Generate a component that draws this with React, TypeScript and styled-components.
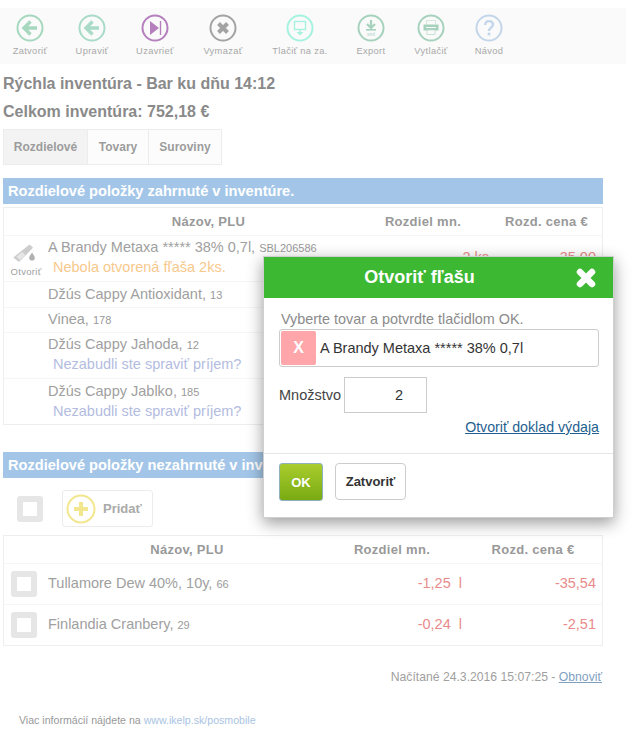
import React from 'react'
import styled, { createGlobalStyle } from 'styled-components'

const GlobalStyle = createGlobalStyle`
  html, body { margin: 0; padding: 0; background: #fff; }
  body { font-family: "Liberation Sans", Arial, sans-serif; color: #888; }
`

const Page = styled.div`
  position: relative;
  width: 637px;
  height: 739px;
  overflow: hidden;
  padding-top: 8px;
  box-sizing: border-box;
`
const Toolbar = styled.div`
  display: flex;
  width: 626px;
  height: 56px;
  background: #fafafa;
`
const ToolItem = styled.div<{ $w: number }>`
  width: ${p => p.$w}px;
  display: flex;
  flex-direction: column;
  align-items: center;
  padding-top: 6px;
  box-sizing: border-box;
  svg { display: block; }
`
const ToolLabel = styled.div`
  margin-top: 3px;
  font-size: 9.3px;
  font-weight: 400;
  line-height: 12px;
  letter-spacing: 0.35px;
  color: #a8a8a8;
  white-space: nowrap;
`
const Content = styled.div`
  width: 600px;
  margin-left: 3px;
  padding-top: 6px;
`
const Heading = styled.div`
  font-size: 16px;
  font-weight: 700;
  line-height: 28px;
  color: #8a8a8a;
`
const Tabs = styled.div`
  display: flex;
  margin-top: 3px;
  height: 36px;
`
const Tab = styled.div<{ $active?: boolean; $w: number }>`
  width: ${p => p.$w}px;
  box-sizing: border-box;
  border: 1px solid #ececec;
  margin-right: -1px;
  background: ${p => (p.$active ? '#f3f3f3' : '#fcfcfc')};
  font-size: 12px;
  font-weight: 700;
  color: #9c9c9c;
  display: flex;
  align-items: center;
  justify-content: center;
`
const SectionBar = styled.div<{ $top: number }>`
  margin-top: ${p => p.$top}px;
  height: 26px;
  line-height: 26px;
  padding-left: 5px;
  background: #a3c6e8;
  color: #fff;
  font-size: 14.6px;
  font-weight: 700;
`
const Table = styled.div<{ $top: number }>`
  margin-top: ${p => p.$top}px;
  border: 1px solid #eeeeee;
  box-sizing: border-box;
`
const Row = styled.div<{ $cols: string; $h: number }>`
  display: grid;
  grid-template-columns: ${p => p.$cols};
  height: ${p => p.$h}px;
  box-sizing: border-box;
  border-top: 1px solid #f6f6f6;
  &:first-child { border-top: 0; }
`
const HeadCell = styled.div<{ $shift?: number }>`
  font-size: 13px;
  font-weight: 700;
  letter-spacing: 0.3px;
  color: #999;
  text-align: center;
  align-self: center;
  padding-left: ${p => p.$shift ?? 0}px;
`
const IconCell = styled.div`
  display: flex;
  flex-direction: column;
  align-items: center;
  padding-top: 6px;
`
const OpenLabel = styled.div`
  font-size: 9.5px;
  line-height: 11px;
  letter-spacing: 0.3px;
  color: #a0a0a0;
`
const NameCell = styled.div<{ $pad: number }>`
  padding-top: ${p => p.$pad}px;
  white-space: nowrap;
`
const Name = styled.div`
  font-size: 14.5px;
  line-height: 19px;
  color: #a0a0a0;
`
const Plu = styled.span`
  font-size: 11px;
  color: #999;
`
const Note = styled.div<{ $color: string }>`
  padding-left: 5px;
  font-size: 14.5px;
  line-height: 19px;
  color: ${p => p.$color};
`
const ValueCell = styled.div<{ $pr: number; $pad: number }>`
  padding: ${p => p.$pad}px ${p => p.$pr}px 0 0;
  text-align: right;
  font-size: 14.5px;
  line-height: 19px;
  color: #e98b8b;
  white-space: nowrap;
`
const ActionRow = styled.div`
  display: flex;
  align-items: center;
  height: 37px;
  margin-top: 12px;
  padding-left: 14px;
`
const CheckBox = styled.div<{ $mt?: number }>`
  width: 26px;
  height: 26px;
  margin-top: ${p => p.$mt ?? 0}px;
  box-sizing: border-box;
  border: 6px solid #e6e6e6;
  border-radius: 3px;
  background: #fff;
`
const AddButton = styled.div`
  display: flex;
  align-items: center;
  width: 91px;
  height: 37px;
  margin-left: 19px;
  padding-left: 3px;
  box-sizing: border-box;
  border: 1px solid #ececec;
  border-radius: 3px;
  font-size: 13px;
  font-weight: 700;
  color: #aaa;
  gap: 7px;
`
const CheckCell = styled.div`
  padding-left: 7px;
`
const Loaded = styled.div`
  margin-top: 23px;
  padding-right: 1px;
  line-height: 16px;
  text-align: right;
  font-size: 12.2px;
  color: #a0a0a0;
`
const Refresh = styled.span`
  color: #7f9fbf;
  text-decoration: underline;
`
const FooterNote = styled.div`
  margin: 28px 0 0 16px;
  line-height: 14px;
  font-size: 10.6px;
  color: #999;
`
const FooterLink = styled.span`
  color: #a9c3e2;
`

const Modal = styled.div`
  position: absolute;
  left: 263px;
  top: 256px;
  width: 351px;
  height: 262px;
  box-sizing: border-box;
  background: #fff;
  border: 1px solid #cfcfcf;
  box-shadow: 0 5px 15px rgba(0, 0, 0, 0.4);
`
const ModalHeader = styled.div`
  display: flex;
  align-items: center;
  height: 41px;
  background: #3cb832;
  color: #fff;
  font-size: 18px;
  font-weight: 700;
  padding: 0 17px 0 0;
`
const ModalTitle = styled.div`
  flex: 1;
  text-align: center;
  padding-right: 1px;
`
const ModalBody = styled.div`
  padding: 12px 14px 0 15px;
  height: 156px;
  box-sizing: border-box;
  border-bottom: 1px solid #e5e5e5;
`
const Hint = styled.div`
  padding-left: 2px;
  font-size: 14.4px;
  line-height: 18px;
  color: #8b8b8b;
`
const PickBox = styled.div`
  display: flex;
  align-items: center;
  height: 38px;
  margin-top: 1px;
  box-sizing: border-box;
  border: 1px solid #ccc;
  border-radius: 3px;
  padding-left: 1px;
  font-size: 14.5px;
  color: #333;
  gap: 4px;
`
const PickRemove = styled.div`
  width: 35px;
  height: 34px;
  background: #ffa6aa;
  border-radius: 2px;
  color: #fff;
  font-size: 16px;
  font-weight: 700;
  display: flex;
  align-items: center;
  justify-content: center;
`
const QtyRow = styled.div`
  display: flex;
  align-items: center;
  margin-top: 10px;
  font-size: 14.5px;
  color: #444;
  gap: 3px;
`
const QtyInput = styled.div`
  width: 83px;
  height: 36px;
  box-sizing: border-box;
  border: 1px solid #ccc;
  padding-right: 23px;
  line-height: 34px;
  text-align: right;
  color: #333;
`
const DocLink = styled.div`
  margin-top: 6px;
  text-align: right;
  font-size: 14.2px;
  line-height: 17px;
  color: #1f5f8f;
  text-decoration: underline;
`
const ModalFooter = styled.div`
  display: flex;
  gap: 12px;
  padding: 9px 14px 0 15px;
`
const OkButton = styled.div`
  width: 44px;
  height: 38px;
  box-sizing: border-box;
  border: 1px solid #8fb0c0;
  border-radius: 3px;
  background: linear-gradient(#a9cd2e, #79aa12);
  color: #fff;
  font-size: 13px;
  font-weight: 700;
  display: flex;
  align-items: center;
  justify-content: center;
`
const CloseButton = styled.div`
  width: 71px;
  height: 37px;
  box-sizing: border-box;
  border: 1px solid #ccc;
  border-radius: 4px;
  color: #333;
  font-size: 13px;
  font-weight: 700;
  display: flex;
  align-items: center;
  justify-content: center;
`

const Ring = ({ color, children }: { color: string; children: React.ReactNode }) => (
  <svg width="28" height="28" viewBox="0 0 28 28">
    <circle cx="14" cy="14" r="12.5" fill="none" stroke={color} strokeWidth="2" />
    {children}
  </svg>
)

const ArrowLeft = ({ color }: { color: string }) => (
  <Ring color={color}>
    <path d="M14.5 7.5 L8 14 L14.5 20.5 M8.5 14 H21" fill="none" stroke={color} strokeWidth="3.4" />
  </Ring>
)

const tools = [
  {
    label: 'Zatvoriť',
    w: 60,
    icon: <ArrowLeft color="#a6d8bf" />,
  },
  {
    label: 'Upraviť',
    w: 64,
    icon: <ArrowLeft color="#a9dbc8" />,
  },
  {
    label: 'Uzavrieť',
    w: 62,
    icon: (
      <Ring color="#b57fbe">
        <path d="M9 7 L18 14 L9 21 Z" fill="#b57fbe" />
        <path d="M19.5 7 V21" stroke="#b57fbe" strokeWidth="1.4" />
      </Ring>
    ),
  },
  {
    label: 'Vymazať',
    w: 74,
    icon: (
      <Ring color="#a3a3a3">
        <path d="M9.5 9.5 L18.5 18.5 M18.5 9.5 L9.5 18.5" stroke="#a3a3a3" strokeWidth="4" />
      </Ring>
    ),
  },
  {
    label: 'Tlačiť na za.',
    w: 80,
    icon: (
      <Ring color="#a5f2df">
        <rect x="8.5" y="7.5" width="11" height="8" fill="none" stroke="#a5f2df" strokeWidth="1.4" />
        <path d="M14 15.5 V18" stroke="#a5f2df" strokeWidth="1.4" />
        <path d="M10.5 18 H17.5 L14 21.5 Z" fill="#a5f2df" />
      </Ring>
    ),
  },
  {
    label: 'Export',
    w: 62,
    icon: (
      <Ring color="#a6d2bd">
        <path d="M14 6 V13 M10 10 L14 14 L18 10" fill="none" stroke="#a6d2bd" strokeWidth="2.2" />
        <path d="M9 15.8 H19" stroke="#a6d2bd" strokeWidth="1.6" />
        <text x="14" y="21.5" fontSize="5" textAnchor="middle" fill="#a6d2bd">xml</text>
      </Ring>
    ),
  },
  {
    label: 'Vytlačiť',
    w: 58,
    icon: (
      <Ring color="#a6d2bd">
        <path d="M9.5 10 V6.5 H18.5 V10" fill="none" stroke="#d5e9df" strokeWidth="1.2" />
        <path d="M6.5 10.5 H21.5 V16.5 H6.5 Z" fill="#a6d2bd" />
        <path d="M9 13.5 H19" stroke="#fafafa" strokeWidth="1" />
        <rect x="10" y="16" width="8" height="4.5" fill="#fafafa" stroke="#bcdccd" strokeWidth="0.8" />
      </Ring>
    ),
  },
  {
    label: 'Návod',
    w: 58,
    icon: (
      <Ring color="#c3d6ea">
        <path d="M10.2 11 C10.2 5.8 18 6 18 10.6 C18 13.4 14 13.6 14 17" fill="none" stroke="#c3d6ea" strokeWidth="2.4" />
        <path d="M14 18.6 V21.4" stroke="#c3d6ea" strokeWidth="2.6" />
      </Ring>
    ),
  },
]

const BottleIcon = () => (
  <svg width="30" height="24" viewBox="0 0 30 24">
    <path d="M16.7 4 L18.4 2.4 L22 5.6 L20.3 7.4 L16 12 L8 20 L2.3 15.5 L11 8.5 Z" fill="#cdcdcd" />
    <path d="M5.5 14.8 L11 10 L14.5 13 L9 18 Z" fill="#e6e6e6" />
    <path d="M21 10.5 C22.5 13 23.8 14.3 23.8 15.8 A2.8 2.8 0 0 1 18.2 15.8 C18.2 14.3 19.5 13 21 10.5 Z" fill="#b0b0b0" />
  </svg>
)

const PlusIcon = () => (
  <svg width="30" height="30" viewBox="0 0 30 30">
    <circle cx="15" cy="15" r="13.5" fill="none" stroke="#f2e68f" strokeWidth="2" />
    <path d="M15 8 V22 M8 15 H22" stroke="#f2e68f" strokeWidth="4" />
  </svg>
)

const CloseIcon = () => (
  <svg width="20" height="20" viewBox="0 0 20 20">
    <path d="M4 4 L16 16 M16 4 L4 16" stroke="#fff" strokeWidth="6.5" strokeLinecap="round" />
  </svg>
)

const cols1 = '44px 307px 136px 1fr'
const cols2 = '44px 272px 144px 1fr'

export default function App() {
  return (
    <Page>
      <GlobalStyle />
      <Toolbar>
        {tools.map(t => (
          <ToolItem key={t.label} $w={t.w}>
            {t.icon}
            <ToolLabel>{t.label}</ToolLabel>
          </ToolItem>
        ))}
      </Toolbar>
      <Content>
        <Heading>Rýchla inventúra - Bar ku dňu 14:12</Heading>
        <Heading>Celkom inventúra: 752,18 €</Heading>
        <Tabs>
          <Tab $active $w={85}>Rozdielové</Tab>
          <Tab $w={62}>Tovary</Tab>
          <Tab $w={74}>Suroviny</Tab>
        </Tabs>
        <SectionBar $top={13}>Rozdielové položky zahrnuté v inventúre.</SectionBar>
        <Table $top={3}>
          <Row $cols={cols1} $h={27}>
            <div />
            <HeadCell $shift={14}>Názov, PLU</HeadCell>
            <HeadCell>Rozdiel mn.</HeadCell>
            <HeadCell>Rozd. cena €</HeadCell>
          </Row>
          <Row $cols={cols1} $h={46}>
            <IconCell>
              <BottleIcon />
              <OpenLabel>Otvoriť</OpenLabel>
            </IconCell>
            <NameCell $pad={2}>
              <Name>A Brandy Metaxa ***** 38% 0,7l, <Plu>SBL206586</Plu></Name>
              <Note $color="#f7c98c">Nebola otvorená fľaša 2ks.</Note>
            </NameCell>
            <ValueCell $pr={2} $pad={12}>-2 ks</ValueCell>
            <ValueCell $pr={6} $pad={12}>-35,00</ValueCell>
          </Row>
          <Row $cols={cols1} $h={26}>
            <div />
            <NameCell $pad={3}><Name>Džús Cappy Antioxidant, <Plu>13</Plu></Name></NameCell>
          </Row>
          <Row $cols={cols1} $h={25}>
            <div />
            <NameCell $pad={2}><Name>Vinea, <Plu>178</Plu></Name></NameCell>
          </Row>
          <Row $cols={cols1} $h={46}>
            <div />
            <NameCell $pad={2}>
              <Name>Džús Cappy Jahoda, <Plu>12</Plu></Name>
              <Note $color="#b3bce0">Nezabudli ste spraviť príjem?</Note>
            </NameCell>
          </Row>
          <Row $cols={cols1} $h={46}>
            <div />
            <NameCell $pad={3}>
              <Name>Džús Cappy Jablko, <Plu>185</Plu></Name>
              <Note $color="#b3bce0">Nezabudli ste spraviť príjem?</Note>
            </NameCell>
          </Row>
        </Table>
        <SectionBar $top={27}>Rozdielové položky nezahrnuté v inventúre.</SectionBar>
        <ActionRow>
          <CheckBox />
          <AddButton><PlusIcon />Pridať</AddButton>
        </ActionRow>
        <Table $top={8}>
          <Row $cols={cols2} $h={27}>
            <div />
            <HeadCell $shift={6}>Názov, PLU</HeadCell>
            <HeadCell>Rozdiel mn.</HeadCell>
            <HeadCell>Rozd. cena €</HeadCell>
          </Row>
          <Row $cols={cols2} $h={41}>
            <CheckCell><CheckBox $mt={7} /></CheckCell>
            <NameCell $pad={10}><Name>Tullamore Dew 40%, 10y, <Plu>66</Plu></Name></NameCell>
            <ValueCell $pr={2} $pad={10}>-1,25&nbsp;&nbsp;l</ValueCell>
            <ValueCell $pr={6} $pad={10}>-35,54</ValueCell>
          </Row>
          <Row $cols={cols2} $h={41}>
            <CheckCell><CheckBox $mt={7} /></CheckCell>
            <NameCell $pad={10}><Name>Finlandia Cranbery, <Plu>29</Plu></Name></NameCell>
            <ValueCell $pr={2} $pad={10}>-0,24&nbsp;&nbsp;l</ValueCell>
            <ValueCell $pr={6} $pad={10}>-2,51</ValueCell>
          </Row>
        </Table>
        <Loaded>Načítané 24.3.2016 15:07:25 - <Refresh>Obnoviť</Refresh></Loaded>
        <FooterNote>Viac informácií nájdete na <FooterLink>www.ikelp.sk/posmobile</FooterLink></FooterNote>
      </Content>
      <Modal>
        <ModalHeader>
          <ModalTitle>Otvoriť fľašu</ModalTitle>
          <CloseIcon />
        </ModalHeader>
        <ModalBody>
          <Hint>Vyberte tovar a potvrdte tlačidlom OK.</Hint>
          <PickBox>
            <PickRemove>X</PickRemove>
            A Brandy Metaxa ***** 38% 0,7l
          </PickBox>
          <QtyRow>
            Množstvo
            <QtyInput>2</QtyInput>
          </QtyRow>
          <DocLink>Otvoriť doklad výdaja</DocLink>
        </ModalBody>
        <ModalFooter>
          <OkButton>OK</OkButton>
          <CloseButton>Zatvoriť</CloseButton>
        </ModalFooter>
      </Modal>
    </Page>
  )
}
